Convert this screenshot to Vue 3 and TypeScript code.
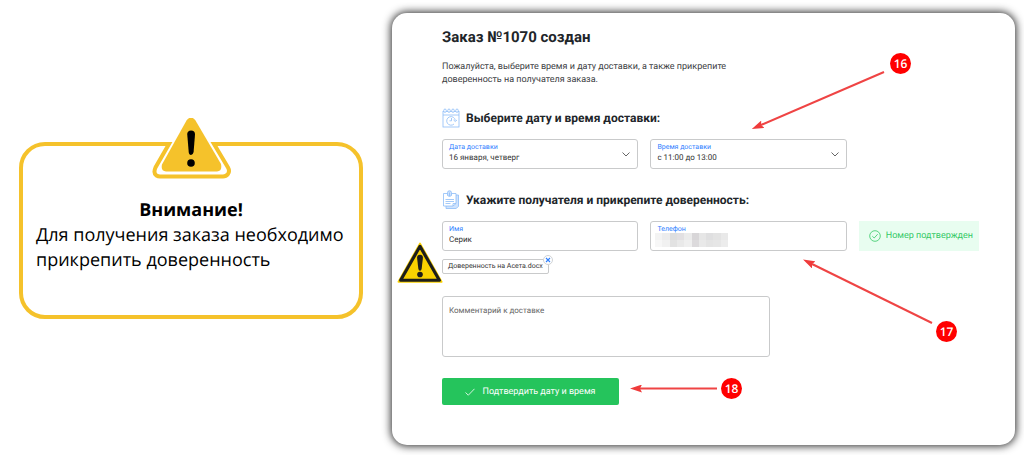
<script setup lang="ts">
import { ref } from 'vue'

interface Marker {
  id: number
  name: string
}

const dates = ['16 января, четверг', '17 января, пятница']
const times = ['с 11:00 до 13:00', 'с 13:00 до 15:00']
const date = ref(dates[0])
const time = ref(times[0])
const recipient = ref('Серик')
const phone = ref('')
const comment = ref('')
const file = ref<string | null>('Доверенность на Асета.docx')

const markers: Marker[] = [
  { id: 16, name: 'marker-schedule' },
  { id: 17, name: 'marker-recipient' },
  { id: 18, name: 'marker-submit' },
]

const mosaic = [
  ['#f3f3f3', '#ececec', '#dedede', '#e2e0e2', '#ebebeb', '#d8d6d8', '#e6e6e6', '#dfdfe0', '#e3e3e3', '#e9e9e9'],
  ['#f7f7f7', '#f1f1f1', '#e2e2e2', '#e9e9e9', '#efefef', '#dcdadc', '#e9e9e9', '#e4e4e4', '#e6e6e6', '#ececec'],
]
</script>

<template>
  <main class="page">
    <aside class="callout">
      <svg class="callout-sign" viewBox="0 0 80 62" aria-hidden="true">
        <path class="sign-gap" d="M19 24 H61 L73 47 L66 56 H14 L7 47 Z" />
        <path class="sign-outline" d="M12 26 H17 L3.500 49.500 Q1 55 4.500 57.500 Q6 58.500 8 58.500 H71 Q74 58.500 76 56 Q78 53 76 49.500 L62 26 H68" />
        <path class="sign-body" d="M34.500 2.500 Q39 -3.500 43.500 2.500 L69 46 Q70.500 53 65 53.500 H14 Q8.500 53 10 46.500 Z" />
        <path d="M35.200 16 Q35.500 12.500 39 12.500 Q43 12.500 43 16.500 L41.600 34 Q41 37 39 37 Q37 37 36.700 34 Z" />
        <circle cx="39" cy="45" r="3.800" />
      </svg>
      <h2 class="callout-title">Внимание!</h2>
      <p class="callout-text">Для получения заказа необходимо прикрепить доверенность</p>
    </aside>

    <section class="card">
      <form class="order" @submit.prevent>
        <h1 class="title">Заказ №1070 создан</h1>
        <p class="intro">Пожалуйста, выберите время и дату доставки, а также прикрепите доверенность на получателя заказа.</p>

        <h2 class="section-title">
          <svg class="section-icon" viewBox="0 0 18 20" aria-hidden="true">
            <rect x="1" y="3.500" width="16" height="15.500" />
            <path d="M1 7 H17" />
            <g class="rings">
              <ellipse cx="3" cy="2.700" rx="1.300" ry="1.700" /><ellipse cx="7" cy="2.700" rx="1.300" ry="1.700" />
              <ellipse cx="11" cy="2.700" rx="1.300" ry="1.700" /><ellipse cx="15" cy="2.700" rx="1.300" ry="1.700" />
            </g>
            <path d="M12 16 A4.300 4.300 0 1 1 13.300 12.500 M9.500 10 V12.800 H7.500 M11.500 12 L13.300 13.500 L15 12" />
          </svg>
          Выберите дату и время доставки:
        </h2>
        <div class="row">
          <div class="field">
            <label for="date">Дата доставки</label>
            <select id="date" v-model="date">
              <option v-for="d in dates" :key="d">{{ d }}</option>
            </select>
            <svg class="chevron" viewBox="0 0 8 5" aria-hidden="true"><path d="M.5 .5 L4 4 L7.500 .5" /></svg>
          </div>
          <div class="field">
            <label for="time">Время доставки</label>
            <select id="time" v-model="time">
              <option v-for="t in times" :key="t">{{ t }}</option>
            </select>
            <svg class="chevron" viewBox="0 0 8 5" aria-hidden="true"><path d="M.5 .5 L4 4 L7.500 .5" /></svg>
          </div>
        </div>

        <h2 class="section-title">
          <svg class="section-icon" viewBox="0 0 18 20" aria-hidden="true">
            <path class="note-back" d="M4 16 V18.500 H14 L16.500 16 V5 H14 V13.500 L11 16 Z" />
            <path d="M5.500 3.500 H1.500 V16 H11 L14 13.500 V3.500 H9.500 M14 5 H16.500 V16.500 L14 18.500 H4 V16 M11 16 V13.500 H14" />
            <path class="note-back" d="M5.500 5.500 V2.500 Q5.500 .8 7.500 .8 Q9.500 .8 9.500 2.500 V5.500 Q7.500 7.500 5.500 5.500" />
            <path d="M5.500 5.500 V2.500 Q5.500 .8 7.500 .8 Q9.500 .8 9.500 2.500 V5.500 Q7.500 7.500 5.500 5.500 M7.500 2.500 V6" />
            <path d="M3.500 9.500 H12 M3.500 11.500 H12 M3.500 13.500 H8.500" />
          </svg>
          Укажите получателя и прикрепите доверенность:
        </h2>
        <div class="row">
          <div class="field">
            <label for="name">Имя</label>
            <input id="name" v-model="recipient" type="text" />
          </div>
          <div class="field">
            <label for="phone">Телефон</label>
            <input id="phone" v-model="phone" type="tel" />
            <svg class="mosaic" viewBox="0 0 10 2" preserveAspectRatio="none" shape-rendering="crispEdges" aria-hidden="true">
              <g v-for="(line, y) in mosaic" :key="y">
                <rect v-for="(tone, x) in line" :key="x" :x="x" :y="y" width="1" height="1" :fill="tone" />
              </g>
            </svg>
          </div>
          <div class="confirmed">
            <svg viewBox="0 0 12 12" aria-hidden="true">
              <circle cx="6" cy="6" r="5.300" />
              <path d="M3.300 6.200 L5.200 8 L8.700 4.200" />
            </svg>
            <span>Номер подтвержден</span>
          </div>
        </div>

        <div class="files">
          <div v-if="file" class="chip">
            {{ file }}
            <button class="remove" type="button" aria-label="Удалить файл" @click="file = null">
              <svg viewBox="0 0 10 10" aria-hidden="true"><path d="M2.500 2.500 L7.500 7.500 M7.500 2.500 L2.500 7.500" /></svg>
            </button>
          </div>
        </div>

        <textarea v-model="comment" class="comment" placeholder="Комментарий к доставке" aria-label="Комментарий к доставке"></textarea>

        <button class="submit" type="submit">
          <svg viewBox="0 0 10 8" aria-hidden="true"><path d="M.5 4.500 L3.300 7.200 L9.500 .8" /></svg>
          Подтвердить дату и время
        </button>
      </form>

      <svg class="file-warning" viewBox="0 0 44 40" aria-hidden="true">
        <path class="fw-halo" d="M22 1.500 L42.500 38 H1.500 Z" />
        <path class="fw-body" d="M22 4 L40.500 36.500 H3.500 Z" />
        <path class="fw-mark" d="M19.200 15 Q19.200 12 22 12 Q24.800 12 24.800 15 L23.600 25.500 Q23.300 27.500 22 27.500 Q20.700 27.500 20.400 25.500 Z" />
        <circle class="fw-mark" cx="22" cy="31" r="2.700" />
      </svg>

      <svg class="arrows" viewBox="0 0 623 432" aria-hidden="true">
        <defs>
          <marker id="head" viewBox="0 0 12 8" refX="2" refY="4" markerWidth="12" markerHeight="8" markerUnits="userSpaceOnUse" orient="auto">
            <path d="M0 0 L12 4 L0 8 L2 4 Z" />
          </marker>
        </defs>
        <path d="M492 59 L369 112" marker-end="url(#head)" />
        <path d="M540 310 L420 251" marker-end="url(#head)" />
        <path d="M325 375.500 L248 375.500" marker-end="url(#head)" />
      </svg>
      <span v-for="m in markers" :key="m.id" class="marker" :class="m.name">{{ m.id }}</span>
    </section>
  </main>
</template>

<style>
body {
  margin: 0;
  background: #fff;
}
</style>

<style scoped>
.page {
  display: grid;
  grid-template-columns: 344fr 623fr;
  gap: 29px;
  align-items: start;
  padding: 13px 9px 10px 19px;
  font-family: Roboto, "Liberation Sans", sans-serif;
  color: #212529;
  text-rendering: geometricPrecision;
}
h1, h2, p { margin: 0; }
svg { display: block; fill: none; }

.callout {
  position: relative;
  box-sizing: border-box;
  margin-top: 129px;
  padding: 52px 13px 42px;
  border: 4px solid #f5c22b;
  border-radius: 26px;
  color: #000;
  font-family: "Open Sans", "Noto Sans", sans-serif;
  font-size: 18px;
  line-height: 25px;
}
.callout-sign {
  position: absolute;
  top: -28px;
  left: 129px;
  width: 80px;
  height: 62px;
  fill: #000;
}
.sign-gap { fill: #fff; }
.sign-outline { fill: none; stroke: #f5c22b; stroke-width: 4; }
.sign-body { fill: #f5c22b; }
.callout-title {
  font-size: 18px;
  font-weight: 700;
  text-align: center;
}

.card {
  position: relative;
  padding: 14px 36px 40px 50px;
  border-radius: 15px;
  background: #fff;
  box-shadow: 0 0 9px 1px rgba(0, 0, 0, 0.85);
}
.title { font-size: 15px; line-height: 20px; font-weight: 700; }
.intro {
  max-width: 290px;
  margin-top: 14px;
  font-size: 9px;
  line-height: 13px;
  color: #3c4043;
}
.section-title {
  display: flex;
  align-items: center;
  gap: 6px;
  margin-top: 21px;
  font-size: 12px;
  line-height: 20px;
  font-weight: 700;
}
.section-icon {
  width: 18px;
  height: 20px;
  stroke: #8dbcf8;
  stroke-width: 0.8;
}
.note-back { fill: #cfe3fd; stroke: none; }
.rings { fill: #fff; }
.row {
  display: grid;
  grid-template-columns: 196fr 196fr 120fr;
  gap: 12px;
  margin-top: 11px;
}
.field {
  position: relative;
  display: flex;
  flex-direction: column;
  box-sizing: border-box;
  height: 30px;
  padding: 2px 6px;
  border: 1px solid #c9cacb;
  border-radius: 3px;
}
.field label { font-size: 7px; line-height: 10px; color: #2f80ff; }
.field select, .field input {
  appearance: none;
  width: 100%;
  height: 12px;
  padding: 0;
  border: 0;
  outline: 0;
  background: transparent;
  color: #333;
  font: 8px/12px Roboto, sans-serif;
  text-rendering: inherit;
}
.chevron {
  position: absolute;
  top: 12px;
  right: 7px;
  width: 8px;
  height: 5px;
  stroke: #666;
  pointer-events: none;
}
.mosaic {
  position: absolute;
  top: 11px;
  left: 4px;
  width: 73px;
  height: 14px;
}
.confirmed {
  display: flex;
  align-items: center;
  gap: 5px;
  padding-left: 10px;
  background: #e8fdf0;
  color: #35c966;
  font-size: 9px;
  white-space: nowrap;
}
.confirmed svg { width: 12px; height: 12px; stroke: #35c966; stroke-width: 0.8; }
.files { display: flex; margin-top: 8px; }
.chip {
  position: relative;
  box-sizing: border-box;
  height: 15px;
  padding: 0 5px;
  border: 1px solid #c9cacb;
  border-radius: 2px;
  font-size: 7px;
  line-height: 13px;
  color: #333;
}
.remove {
  position: absolute;
  top: -5px;
  right: -5px;
  width: 10px;
  height: 10px;
  padding: 0;
  border: 0;
  border-radius: 50%;
  background: #fff;
}
.remove svg {
  box-sizing: border-box;
  border: 1px solid #d0d3d6;
  border-radius: 50%;
  stroke: #2f80ff;
  stroke-width: 1.4;
}
.comment {
  display: block;
  box-sizing: border-box;
  width: 61%;
  height: 61px;
  margin-top: 22px;
  padding: 8px 6px;
  border: 1px solid #c9cacb;
  border-radius: 3px;
  outline: 0;
  resize: none;
  font: 8px/12px Roboto, sans-serif;
  text-rendering: inherit;
}
.comment::placeholder { color: #666; opacity: 1; }
.submit {
  display: flex;
  align-items: center;
  justify-content: center;
  gap: 7px;
  width: 177px;
  height: 27px;
  margin-top: 21px;
  padding: 0;
  border: 0;
  border-radius: 2px;
  background: #25c45c;
  color: #fff;
  font: 9px/12px Roboto, sans-serif;
  text-rendering: inherit;
}
.submit svg { width: 10px; height: 8px; stroke: #fff; stroke-width: 0.8; }

.file-warning {
  position: absolute;
  top: 229px;
  left: 5px;
  width: 46px;
  height: 42px;
  stroke-linejoin: round;
}
.fw-halo { fill: #f9d100; stroke: #f9d100; stroke-width: 2; }
.fw-body { fill: #f9d100; stroke: #1d1d1b; stroke-width: 3; }
.fw-mark { fill: #1d1d1b; }
.arrows {
  position: absolute;
  top: 0;
  left: 0;
  width: 623px;
  height: 432px;
  stroke: #ef4444;
  stroke-width: 2;
  pointer-events: none;
}
.arrows marker path { fill: #ef3b3b; stroke: none; }
.marker {
  position: absolute;
  width: 21px;
  height: 21px;
  border-radius: 50%;
  background: #f00;
  color: #fff;
  font: 600 12px/21px "Open Sans", sans-serif;
  text-align: center;
}
.marker-schedule { top: 40px; left: 498px; }
.marker-recipient { top: 308px; left: 544px; }
.marker-submit { top: 365px; left: 329px; }
</style>
